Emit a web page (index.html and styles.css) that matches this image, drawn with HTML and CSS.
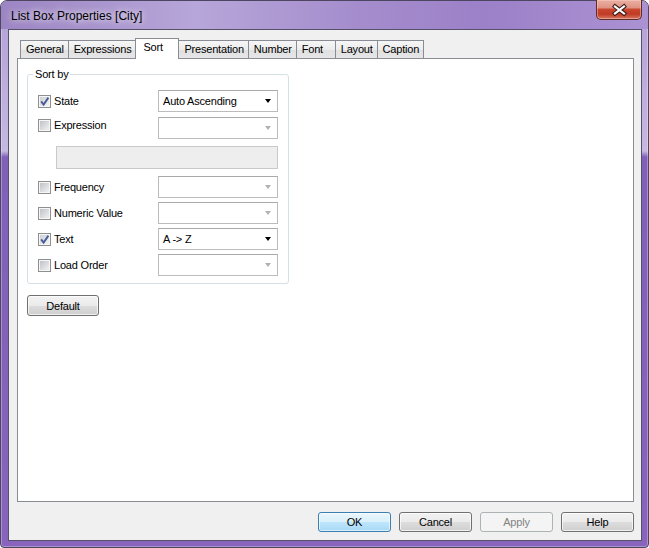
FILE: index.html
```html
<!DOCTYPE html>
<html lang="en">
<head>
    <meta charset="UTF-8">
    <meta name="viewport" content="width=device-width, initial-scale=1.0">
    <title>List Box Properties [City]</title>
    <link rel="stylesheet" href="styles.css">
</head>
<body>
    <div class="window">
        <div class="titlebar">
            <span class="title">List Box Properties [City]</span>
            <button class="close-btn" aria-label="Close">
                <svg width="44" height="19" viewBox="0 0 44 19">
                    <path d="M18 6.5 L27 13.5 M27 6.5 L18 13.5" stroke="#3b1c1a" stroke-width="4.2" stroke-linecap="square" fill="none"/>
                    <path d="M18 6.5 L27 13.5 M27 6.5 L18 13.5" stroke="#ffffff" stroke-width="2.2" stroke-linecap="square" fill="none"/>
                </svg>
            </button>
        </div>

        <div class="client">
            <div class="tabs">
                <div class="tab">General</div>
                <div class="tab">Expressions</div>
                <div class="tab active">Sort</div>
                <div class="tab">Presentation</div>
                <div class="tab">Number</div>
                <div class="tab">Font</div>
                <div class="tab">Layout</div>
                <div class="tab">Caption</div>
            </div>

            <div class="panel">
                <div class="group">
                    <div class="group-title">Sort by</div>
                    <div class="sort-rows">
                        <div class="sort-row">
                            <label class="check"><span class="box checked"><svg width="13" height="13" viewBox="0 0 13 13"><path d="M3.2 6.4 L5.6 9.6 L10.4 2.6" stroke="#4a5d98" stroke-width="1.9" fill="none"/></svg></span>State</label>
                            <div class="combo"><span>Auto Ascending</span><span class="arrow"></span></div>
                        </div>
                        <div class="sort-row expr">
                            <label class="check"><span class="box"></span>Expression</label>
                            <div class="combo disabled"><span></span><span class="arrow"></span></div>
                        </div>
                        <div class="expr-field"></div>
                        <div class="sort-row freq">
                            <label class="check"><span class="box"></span>Frequency</label>
                            <div class="combo disabled"><span></span><span class="arrow"></span></div>
                        </div>
                        <div class="sort-row">
                            <label class="check"><span class="box"></span>Numeric Value</label>
                            <div class="combo disabled"><span></span><span class="arrow"></span></div>
                        </div>
                        <div class="sort-row">
                            <label class="check"><span class="box checked"><svg width="13" height="13" viewBox="0 0 13 13"><path d="M3.2 6.4 L5.6 9.6 L10.4 2.6" stroke="#4a5d98" stroke-width="1.9" fill="none"/></svg></span>Text</label>
                            <div class="combo"><span>A -&gt; Z</span><span class="arrow"></span></div>
                        </div>
                        <div class="sort-row">
                            <label class="check"><span class="box"></span>Load Order</label>
                            <div class="combo disabled"><span></span><span class="arrow"></span></div>
                        </div>
                    </div>
                </div>

                <button class="btn default-btn">Default</button>
            </div>

            <div class="dialog-buttons">
                <button class="btn btn-focus">OK</button>
                <button class="btn">Cancel</button>
                <button class="btn" disabled>Apply</button>
                <button class="btn">Help</button>
            </div>
        </div>
    </div>
</body>
</html>
```

FILE: styles.css
```css
body {
    margin: 0;
    width: 649px;
    height: 548px;
    overflow: hidden;
    background: #ffffff;
    font-family: "Liberation Sans", Arial, sans-serif;
    font-size: 11px;
    letter-spacing: -0.2px;
    color: #000;
}
.window {
    box-sizing: border-box;
    width: 649px;
    height: 548px;
    border: 1px solid #4c4660;
    border-radius: 7px 7px 4px 4px;
    padding: 0 6px 6px 7px;
    display: flex;
    flex-direction: column;
    background: linear-gradient(to bottom, #a790cc 0, #b6a5d9 30px, #c5b8e2 150px, #8060b9 156px, #8864bc 100%);
    box-shadow: inset 0 0 0 1px rgba(255, 255, 255, 0.3);
}
.titlebar {
    height: 28px;
    flex-shrink: 0;
    display: flex;
    justify-content: space-between;
    align-items: flex-start;
    margin: 0 -6px 0 -7px;
    padding: 0 6px 0 7px;
    border-radius: 6px 6px 0 0;
    background: linear-gradient(to right, #9c85c3 0, #b7a6d9 30%, #a58dcd 55%, #9c80c8 75%, #ab92d3 100%);
}
.title {
    padding: 8px 0 0 3px;
    font-size: 12px;
    line-height: 14px;
    letter-spacing: 0;
    text-shadow: 0 0 6px rgba(255, 255, 255, 0.8), 0 0 10px rgba(255, 255, 255, 0.5);
}
.close-btn {
    width: 46px;
    height: 20px;
    margin-top: -1px;
    padding: 0;
    border: 1px solid #5e2d29;
    border-top: none;
    border-radius: 0 0 5px 5px;
    background: linear-gradient(to bottom, #eab0a3 0%, #df9383 40%, #c9462f 50%, #c13b25 75%, #d87a64 100%);
    box-shadow: inset 0 0 0 1px rgba(255, 210, 200, 0.45);
    display: block;
}
.close-btn svg {
    display: block;
}
.client {
    flex: 1;
    min-height: 0;
    display: flex;
    flex-direction: column;
    border: 1px solid #57506a;
    background: #f0f0f0;
    padding: 8px 7px 8px 8px;
}
.tabs {
    display: flex;
    align-items: flex-end;
    height: 20px;
    padding-left: 3px;
}
.tab {
    box-sizing: border-box;
    height: 18px;
    min-width: 40px;
    padding: 0 4px 0 5px;
    border: 1px solid #898c95;
    border-bottom: none;
    background: linear-gradient(to bottom, #f6f6f6 0%, #ececec 50%, #e0e0e0 51%, #e6e6e6 100%);
    line-height: 17px;
    white-space: nowrap;
}
.tab + .tab {
    margin-left: -1px;
}
.tab.active {
    height: 21px;
    min-width: 44px;
    margin: 0 -2px -1px -1px;
    padding: 0 7px;
    background: #ffffff;
    line-height: 17px;
    position: relative;
    z-index: 1;
}
.tab.active + .tab {
    margin-left: 1px;
}
.panel {
    flex: 1;
    min-height: 0;
    border: 1px solid #898c95;
    background: #ffffff;
    padding: 15px 9px 0 9px;
}
.group {
    box-sizing: border-box;
    width: 262px;
    border: 1px solid #d5dfe5;
    border-radius: 3px;
    padding: 0 10px 7px;
}
.group-title {
    width: fit-content;
    margin: -7px 0 0 -5px;
    padding: 0 2px;
    background: #ffffff;
    line-height: 13px;
}
.sort-rows {
    margin-top: 9px;
    display: flex;
    flex-direction: column;
    gap: 4px;
}
.sort-row {
    display: flex;
    align-items: center;
    height: 22px;
}
.sort-row.expr {
    margin-top: 1px;
    align-items: flex-start;
}
.sort-row.expr .check {
    margin-top: 2px;
}
.sort-row.freq {
    margin-top: 3px;
}
.check {
    width: 120px;
    display: flex;
    align-items: center;
    gap: 3px;
    line-height: 13px;
}
.box {
    box-sizing: border-box;
    width: 13px;
    height: 13px;
    flex-shrink: 0;
    border: 1px solid #8e8f8f;
    background: linear-gradient(135deg, #b9bdc3 0%, #e4e5e7 70%, #f2f2f2 100%);
    box-shadow: inset 0 0 0 1px #f6f6f6;
}
.box svg {
    display: block;
    margin: -1px;
    overflow: visible;
}
.box.checked {
    background: linear-gradient(135deg, #c8ccd2 0%, #eaebec 70%, #f6f6f6 100%);
}
.combo {
    box-sizing: border-box;
    width: 120px;
    height: 22px;
    border: 1px solid #bcbcbc;
    border-top-color: #a9a9a9;
    background: #ffffff;
    display: flex;
    align-items: center;
    justify-content: space-between;
    padding: 0 6px 0 4px;
    line-height: 13px;
}
.arrow {
    width: 0;
    height: 0;
    border-left: 3.5px solid transparent;
    border-right: 3.5px solid transparent;
    border-top: 4px solid #000000;
}
.combo.disabled .arrow {
    border-top-color: #b2b2b2;
}
.expr-field {
    box-sizing: border-box;
    height: 23px;
    margin: 3px 0 0 18px;
    border: 1px solid #c9c9c9;
    background: #eeeeee;
}
.btn {
    box-sizing: border-box;
    width: 72px;
    height: 21px;
    padding: 0;
    border: 1px solid #707070;
    border-radius: 3px;
    background: linear-gradient(to bottom, #f2f2f2 0%, #ebebeb 50%, #dddddd 51%, #cfcfcf 100%);
    box-shadow: inset 0 0 0 1px rgba(255, 255, 255, 0.7);
    font-family: inherit;
    font-size: 11px;
    letter-spacing: inherit;
    color: #000;
}
.btn:disabled {
    border-color: #adb2b5;
    background: #f4f4f4;
    box-shadow: none;
    color: #838383;
}
.btn-focus {
    border-color: #3c7fb1;
    background: linear-gradient(to bottom, #eaf6fd 0%, #d9f0fc 50%, #bee6fd 51%, #a7d9f5 100%);
    box-shadow: inset 0 0 0 1px rgba(255, 255, 255, 0.6);
}
.default-btn {
    display: block;
    margin-top: 11px;
}
.dialog-buttons {
    display: flex;
    justify-content: flex-end;
    gap: 8px;
    margin-top: 10px;
}
.dialog-buttons .btn {
    width: 73px;
    height: 20px;
}
```
